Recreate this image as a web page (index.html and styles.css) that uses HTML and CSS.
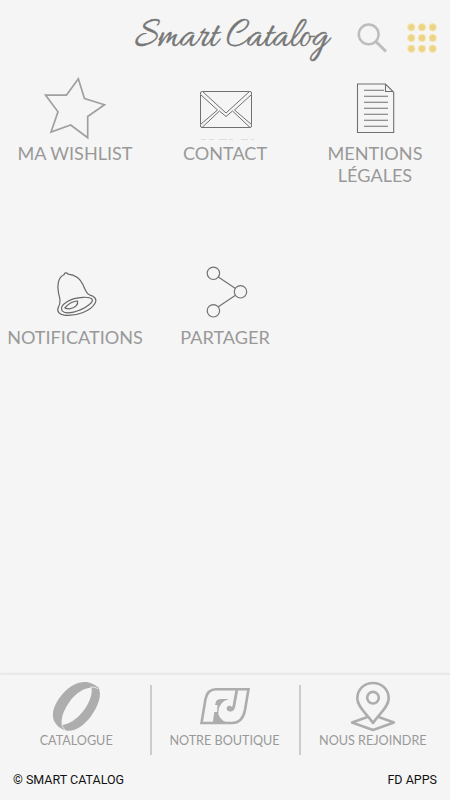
FILE: index.html
```html
<!DOCTYPE html>
<html lang="fr">
<head>
    <meta charset="UTF-8">
    <meta name="viewport" content="width=device-width, initial-scale=1.0">
    <title>Smart Catalog</title>
    <link rel="stylesheet" href="styles.css">
</head>
<body>

    <!-- Header -->
    <header class="header">
        <h1 class="logo">Smart Catalog</h1>
        <button class="header-btn search-btn" aria-label="Rechercher">
            <svg width="32" height="32" viewBox="0 0 32 32" fill="none" stroke="#bdbdbd">
                <circle cx="12.7" cy="12.3" r="9.9" stroke-width="2.5"/>
                <path d="M19.8 19.5L30 29.5" stroke-width="3"/>
            </svg>
        </button>
        <button class="header-btn" aria-label="Menu">
            <svg width="30" height="30" viewBox="0 0 30 30" fill="#ecd487" stroke="#f8e7b3" stroke-width="1">
                <circle cx="4.3" cy="4.3" r="3.7"/><circle cx="15" cy="4.3" r="3.7"/><circle cx="25.7" cy="4.3" r="3.7"/>
                <circle cx="4.3" cy="15" r="3.7"/><circle cx="15" cy="15" r="3.7"/><circle cx="25.7" cy="15" r="3.7"/>
                <circle cx="4.3" cy="25.7" r="3.7"/><circle cx="15" cy="25.7" r="3.7"/><circle cx="25.7" cy="25.7" r="3.7"/>
            </svg>
        </button>
    </header>

    <!-- Menu -->
    <main class="menu">
        <a class="menu-item">
            <svg class="menu-icon" viewBox="0 -0.3 150 68" fill="none" stroke="#a0a0a0" stroke-width="1.7">
                <path d="M78.3 4.5L84.5 24.2L104.5 30.5L87.7 42.2V63.5L70.7 50.7L51 57.7L58 37.5L45.5 20.8H66.5Z"/>
            </svg>
            <span>MA WISHLIST</span>
        </a>
        <a class="menu-item">
            <svg class="menu-icon" viewBox="0 -1 150 68" fill="none" stroke="#707070" stroke-width="1">
                <path d="M52.5 16.5H99.5L76 38Z"/>
                <path d="M50.5 19.5V49.5L67.5 35ZM101.5 19.5V49.5L84.5 35Z"/>
                <path d="M52 52.5H100L82.5 36L76 41.5L69.5 36Z"/>
                <path d="M50.5 19V18Q50.5 16.5 52 16.5M101.5 19V18Q101.5 16.5 100 16.5M50.5 50V51Q50.5 52.5 52 52.5M101.5 50V51Q101.5 52.5 100 52.5"/>
                <path stroke="#dddddd" stroke-dasharray="5 3 5 5 8 2 4 8 7 3" d="M51 64.5H104"/>
            </svg>
            <span>CONTACT</span>
        </a>
        <a class="menu-item">
            <svg class="menu-icon" viewBox="0 -0.8 150 68" fill="none" stroke="#707070" stroke-width="1.1">
                <path d="M57.5 9.2H85.5L93.7 17.5V57.7H57.5ZM85.5 9.2V16.7H93.5"/>
                <path d="M64 15.5H84M64 21.5H88M64 27.5H88M64 33.5H88M64 39.5H88M64 45.5H88M64 51.5H88"/>
            </svg>
            <span>MENTIONS LÉGALES</span>
        </a>
        <a class="menu-item">
            <svg class="menu-icon" viewBox="0 -11.8 150 68" fill="none" stroke="#686868" stroke-width="1.2">
                <path d="M64 5C64.3 3 66.5 2.3 68 4.3C76 5 80.5 9.5 83 15C85.5 21 86.5 24 89.5 25C95 26.5 97.2 29.5 95 33.5C91 41 77 46.5 65.5 45.5C59 45 56.6 41.5 58.3 37.5C61 33 60 29 58.5 23C57 15.5 58 7.5 64 5Z"/>
                <path d="M61.8 40.5C59.5 35 70 28 83 27.5C93 27 95 30.5 89 35C81 41.5 65 46 61.8 40.5Z"/>
                <path d="M65.3 37.5C68 34 74 31 77.5 31.2C78.5 34.5 75.5 38.5 69.5 39C66.5 39 64 38.5 65.3 37.5Z"/>
            </svg>
            <span>NOTIFICATIONS</span>
        </a>
        <a class="menu-item">
            <svg class="menu-icon" viewBox="0 -11.3 150 68" fill="none" stroke="#727272" stroke-width="1.2">
                <path d="M68.3 7.7L85.5 19.2M68.3 37.5L85.5 26"/>
                <circle cx="63.4" cy="4" r="6.2"/><circle cx="90.5" cy="22.5" r="6.2"/><circle cx="63.4" cy="41.5" r="6.2"/>
            </svg>
            <span>PARTAGER</span>
        </a>
    </main>

    <!-- Bottom bar -->
    <footer class="footer">
        <nav class="tabs">
            <a class="tab">
                <svg width="60" height="54" viewBox="0 0 60 54">
                    <path fill="#adadad" fill-rule="evenodd" d="M38.7 2C44 2 49 4.5 52.5 7.5C56 15 53 25 44.5 37C37 46 29 52 20 50.5C15 49.5 11 46 8 41C5 33 8 24 17 13.5C24 6 31 2 38.7 2ZM45.4 7.5C38 8 30 13 24.5 20.5C18 29 14.5 38 16 45C23 44 30 40 36.5 32C43 24 47 14 45.4 7.5Z"/>
                    <path fill="none" stroke="#f5f5f5" stroke-width=".8" d="M44 7.2C47 6.9 49.5 7.3 52 8.7M15.7 44.3C16.2 46.5 17.5 48.5 19.5 50.3"/>
                </svg>
                <span>CATALOGUE</span>
            </a>
            <a class="tab">
                <svg width="60" height="54" viewBox="-1 0 60 54">
                    <path fill="none" stroke="#adadad" stroke-width="2.6" d="M21 9.3H53.5L50 30Q47.5 43 37 43H6.5L10.5 19Q12.5 9.3 21 9.3Z"/>
                    <path fill="#adadad" d="M20 25L21 21.5Q22 19 26 19H34Q28 20.5 25.5 25ZM19.3 32H23Q23.500 39.500 32 42.500H17.800Z"/>
                    <path fill="#adadad" d="M22.500 24.500H26Q23 28 23.500 33H22Z"/>
                    <path fill="none" stroke="#adadad" stroke-width="2.8" d="M41.8 10L38.8 26.5Q38 30.5 34.5 30"/>
                    <circle fill="#adadad" cx="34.5" cy="28.5" r="2.8"/>
                </svg>
                <span>NOTRE BOUTIQUE</span>
            </a>
            <a class="tab">
                <svg width="60" height="54" viewBox="-1 0 60 54" fill="none" stroke="#adadad" stroke-width="2.6" stroke-linejoin="round">
                    <path d="M29 43C23 34 13.3 27 13.3 18.5C13.3 9.5 20 3 29 3S44.7 9.5 44.7 18.5C44.7 27 35 34 29 43Z"/>
                    <circle cx="29" cy="17.7" r="5.8"/>
                    <path stroke-width="2.4" d="M23.5 37L8 42.5L29 50L50 42.5L34.5 37"/>
                </svg>
                <span>NOUS REJOINDRE</span>
            </a>
        </nav>
        <div class="copyright">
            <span>© SMART CATALOG</span>
            <span>FD APPS</span>
        </div>
    </footer>

</body>
</html>
```
FILE: styles.css
```css
/* General Styles */
* {
    box-sizing: border-box;
}

body {
    font-family: Lato, sans-serif;
    margin: 0;
    height: 100vh;
    display: flex;
    flex-direction: column;
    background-color: #f5f5f5;
    color: #999;
}

/* Header */
.header {
    display: flex;
    align-items: center;
    justify-content: flex-end;
    height: 74px;
    padding: 1px 13px 0 0;
}

.logo {
    margin: 0 28px 0 0;
    font-family: "Allura", "Great Vibes", "Liberation Serif", cursive;
    font-size: 44px;
    font-weight: normal;
    line-height: 44px;
    white-space: nowrap;
    color: #777;
    -webkit-text-stroke: 0.5px #777;
    transform: scaleX(0.87);
    transform-origin: right center;
}

.header-btn {
    display: flex;
    padding: 0;
    border: none;
    background: none;
}

.search-btn {
    margin-right: 19px;
}

/* Menu */
.menu {
    flex: 1;
    display: grid;
    grid-template-columns: repeat(3, 1fr);
    grid-template-rows: 184px 184px;
}

.menu-item {
    display: flex;
    flex-direction: column;
    align-items: center;
    text-align: center;
    font-size: 18.1px;
    line-height: 22px;
}

.menu-item span {
    max-width: 140px;
}

.menu-icon {
    width: 150px;
    height: 68px;
    overflow: visible;
}

/* Footer */
.footer {
    height: 126px;
    border-top: 1px solid #e8e8e8;
    box-shadow: 0 -1px 2px rgba(0, 0, 0, 0.06);
}

.tabs {
    display: flex;
    height: 90px;
    padding: 5px 3px 0 2px;
}

.tab {
    flex: 1;
    display: flex;
    flex-direction: column;
    align-items: center;
    font-size: 12.6px;
    line-height: 14px;
}

.tab + .tab {
    background: linear-gradient(#ccc, #ccc) 0 5px / 2px 70px no-repeat;
}

.copyright {
    display: flex;
    justify-content: space-between;
    padding: 7px 13px;
    font-family: Roboto, sans-serif;
    font-size: 12.5px;
    line-height: 16px;
    color: #111;
}
```
